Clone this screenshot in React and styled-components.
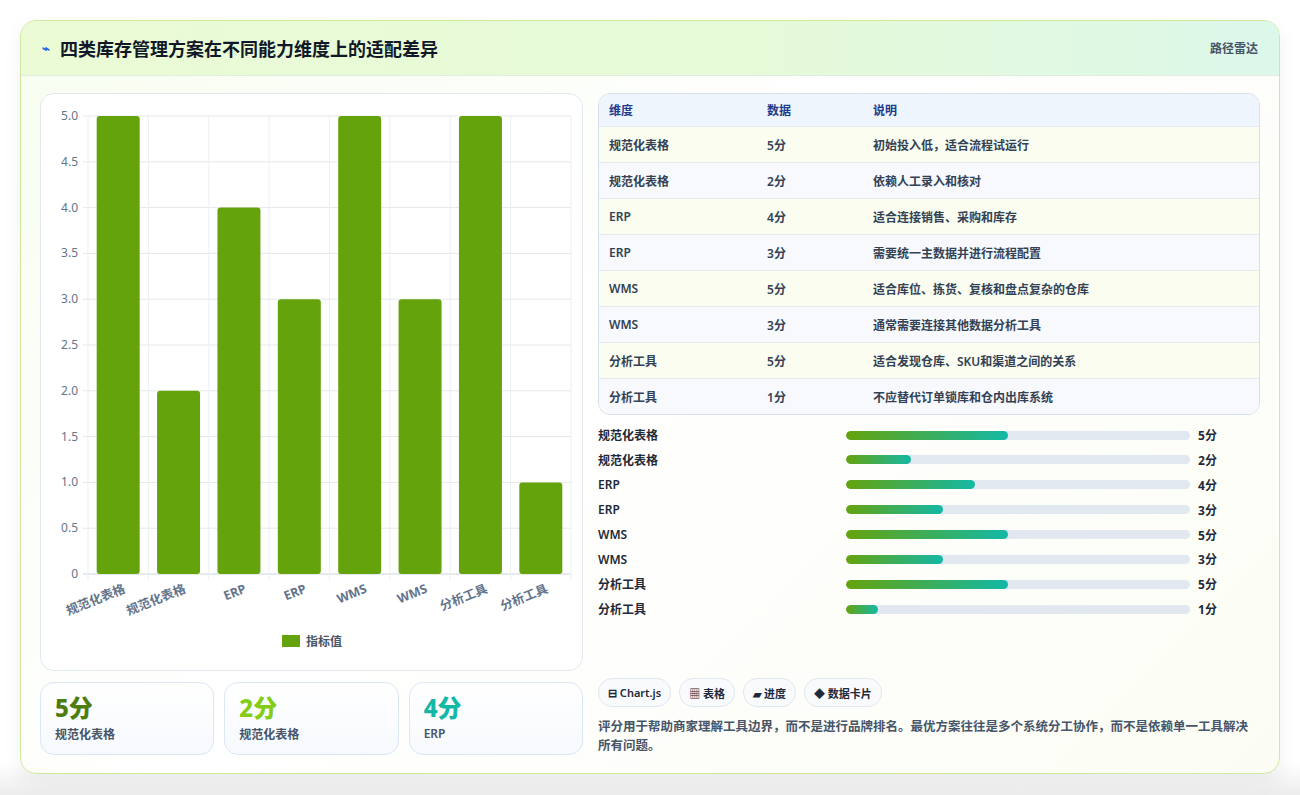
import React from "react";
import styled, { createGlobalStyle } from "styled-components";

const G = createGlobalStyle`
  body{margin:0;background:#f3f4f6;font-family:"Noto Sans","Noto Sans CJK SC",sans-serif;}
`;
const Page = styled.div`padding:20px 20px 21px 20px;height:795px;box-sizing:border-box;background:linear-gradient(#fff,#fff 96%,#ececec);`;
const Card = styled.div`border:1px solid #cfe8a0;border-radius:16px;background:linear-gradient(135deg,#f7fdf0,#ffffff 45%,#fbfdf4);box-shadow:0 8px 20px rgba(0,0,0,.06);overflow:hidden;height:100%;box-sizing:border-box;display:flex;flex-direction:column;`;
const Header = styled.div`height:55px;display:flex;align-items:center;justify-content:space-between;padding:0 21px;background:linear-gradient(90deg,#eafbd5,#e6fad9 60%,#dcf8ea);border-bottom:1px solid #e2eedd;box-sizing:border-box;flex:none;`;
const Title = styled.h1`margin:0;font-size:18px;font-weight:700;color:#111827;display:flex;align-items:center;gap:10px;`;
const Tag = styled.span`font-size:12px;color:#475569;font-weight:600;`;
const Body = styled.div`display:grid;grid-template-columns:543px 1fr;gap:15px;padding:17px 19px 18px 19px;flex:1;`;
const Col = styled.div`display:flex;flex-direction:column;gap:11px;`;
const ChartBox = styled.div`border:1px solid #e2e8f0;border-radius:14px;background:#fff;height:578px;box-sizing:border-box;`;
const Stats = styled.div`display:grid;grid-template-columns:repeat(3,1fr);gap:10px;`;
const Stat = styled.div`border:1px solid #dbe7f5;border-radius:14px;background:linear-gradient(#fff,#f6f9fd);height:73px;padding:10px 14px;box-sizing:border-box;`;
const StatV = styled.div`font-size:24px;font-weight:800;color:${p=>p.c};line-height:30px;`;
const StatL = styled.div`font-size:12px;color:#475569;font-weight:600;margin-top:2px;`;
const Table = styled.div`border:1px solid #d6e0ea;border-radius:12px;overflow:hidden;`;
const Row = styled.div`display:grid;grid-template-columns:158px 106px 1fr;height:${p=>p.h}px;align-items:center;padding-left:10px;font-size:12px;font-weight:${p=>p.head?700:600};color:${p=>p.head?"#1e3a8a":"#334155"};background:${p=>p.head?"#eef5fd":p.odd?"#fafdf0":"#f7f9fc"};border-top:${p=>p.head?"none":"1px solid #e5eaf0"};`;
const Bars = styled.div`display:flex;flex-direction:column;gap:7.4px;margin-top:2px;`;
const BarRow = styled.div`display:grid;grid-template-columns:248px 344px 1fr;align-items:center;height:17.5px;font-size:12px;font-weight:600;color:#1f2937;`;
const Track = styled.div`height:9px;border-radius:5px;background:#e2e8f0;overflow:hidden;`;
const Fill = styled.div`height:100%;border-radius:5px;background:linear-gradient(90deg,#65a30d,#14b8a6);`;
const Val = styled.span`padding-left:8px;font-weight:700;`;
const Spacer = styled.div`flex:1;`;
const Chips = styled.div`display:flex;gap:8px;`;
const Chip = styled.span`border:1px solid #e2e8f0;border-radius:14px;background:#f8fafc;padding:0 9px;height:27px;display:flex;align-items:center;font-size:11px;font-weight:600;color:#1e293b;`;
const Note = styled.p`margin:10px 0 0;font-size:12.5px;line-height:19px;color:#475569;font-weight:600;`;

const data=[["规范化表格",5,"初始投入低，适合流程试运行"],["规范化表格",2,"依赖人工录入和核对"],["ERP",4,"适合连接销售、采购和库存"],["ERP",3,"需要统一主数据并进行流程配置"],["WMS",5,"适合库位、拣货、复核和盘点复杂的仓库"],["WMS",3,"通常需要连接其他数据分析工具"],["分析工具",5,"适合发现仓库、SKU和渠道之间的关系"],["分析工具",1,"不应替代订单锁库和仓内出库系统"]];

function Chart(){
  const x0=47,x1=530,yt=22,yb=480,w=(x1-x0)/8;
  const ticks=[0,0.5,1,1.5,2,2.5,3,3.5,4,4.5,5];
  return <svg width="541" height="576" style={{display:"block"}} fontFamily="Noto Sans, Noto Sans CJK SC, sans-serif">
    {ticks.map(t=>{const y=yb-(t/5)*(yb-yt);return <g key={t}><line x1={x0-5} x2={x1} y1={y} y2={y} stroke={t===0?"#cbd5e1":"#e5e7eb"}/><text x={x0-10} y={y+4} fontSize="12" fill="#64748b" textAnchor="end">{t===0?"0":t.toFixed(1)}</text></g>})}
    {Array.from({length:9}).map((_,i)=><line key={i} x1={x0+i*w} x2={x0+i*w} y1={yt} y2={yb+6} stroke="#eceff3"/>)}
    {data.map((d,i)=>{const h=(d[1]/5)*(yb-yt);const cx=x0+i*w+w/2;return <g key={i}>
      <rect x={cx-21.5} y={yb-h} width="43" height={h} rx="3" fill="#65a30d"/>
      <text transform={`translate(${cx+8},${yb+18}) rotate(-22)`} fontSize="12.5" fontWeight="700" fill="#64748b" textAnchor="end">{d[0]}</text></g>})}
    <rect x="241" y="541" width="18" height="12" fill="#65a30d"/>
    <text x="265" y="552" fontSize="12" fill="#475569" fontWeight="600">指标值</text>
  </svg>;
}

export default function App(){
  return <Page><G/><Card>
    <Header><Title><span style={{color:"#2563eb",fontSize:13}}>⌁</span>四类库存管理方案在不同能力维度上的适配差异</Title><Tag>路径雷达</Tag></Header>
    <Body>
      <Col>
        <ChartBox><Chart/></ChartBox>
        <Stats>
          <Stat><StatV c="#4d7c0f">5分</StatV><StatL>规范化表格</StatL></Stat>
          <Stat><StatV c="#84cc16">2分</StatV><StatL>规范化表格</StatL></Stat>
          <Stat><StatV c="#14b8a6">4分</StatV><StatL>ERP</StatL></Stat>
        </Stats>
      </Col>
      <Col style={{gap:0}}>
        <Table>
          <Row head h={32}><span>维度</span><span>数据</span><span>说明</span></Row>
          {data.map((d,i)=><Row key={i} h={35} odd={i%2===0}><span>{d[0]}</span><span>{d[1]}分</span><span>{d[2]}</span></Row>)}
        </Table>
        <Bars style={{marginTop:11}}>
          {data.map((d,i)=><BarRow key={i}><span>{d[0]}</span><Track><Fill style={{width:`${d[1]*9.4}%`}}/></Track><Val>{d[1]}分</Val></BarRow>)}
        </Bars>
        <Spacer/>
        <Chips><Chip>⊟ Chart.js</Chip><Chip>▦ 表格</Chip><Chip>▰ 进度</Chip><Chip>◆ 数据卡片</Chip></Chips>
        <Note>评分用于帮助商家理解工具边界，而不是进行品牌排名。最优方案往往是多个系统分工协作，而不是依赖单一工具解决所有问题。</Note>
      </Col>
    </Body>
  </Card></Page>;
}
